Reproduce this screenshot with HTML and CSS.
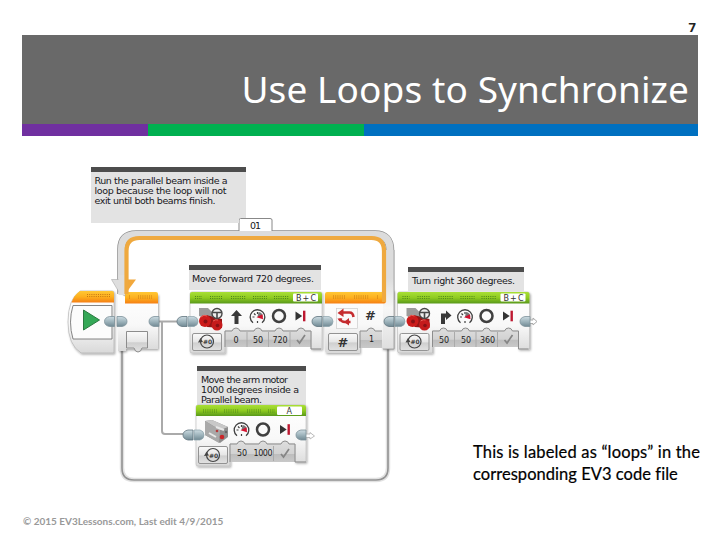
FILE: index.html
```html
<!DOCTYPE html>
<html lang="en">
<head>
<meta charset="utf-8">
<title>Use Loops to Synchronize</title>
<link rel="stylesheet" href="styles.css">
</head>
<body>
<main class="slide">
  <div class="page-number">7</div>
  <header class="banner">
    <h1>Use Loops to Synchronize</h1>
    <div class="stripes"><i class="purple"></i><i class="green"></i><i class="blue"></i></div>
  </header>
  <section class="content">
    <svg class="program" viewBox="60 156 490 334" width="490" height="334">
      <defs>
        <linearGradient id="green" x2="0" y2="1"><stop offset="0" stop-color="#a9df36"/><stop offset=".5" stop-color="#8fcb20"/><stop offset="1" stop-color="#58981b"/></linearGradient>
        <linearGradient id="orange" x2="0" y2="1"><stop offset="0" stop-color="#ffc735"/><stop offset=".5" stop-color="#fdb01e"/><stop offset="1" stop-color="#f57f14"/></linearGradient>
        <linearGradient id="body" x2="0" y2="1"><stop offset="0" stop-color="#fff"/><stop offset=".55" stop-color="#f8f8f8"/><stop offset="1" stop-color="#d9d9d9"/></linearGradient>
        <linearGradient id="rail" gradientUnits="userSpaceOnUse" x1="0" y1="230" x2="0" y2="350"><stop offset="0" stop-color="#dcdcdc"/><stop offset=".4" stop-color="#dcdcdc"/><stop offset=".65" stop-color="#f7f7f7"/><stop offset="1" stop-color="#dedede"/></linearGradient>
        <linearGradient id="param" x2="0" y2="1"><stop offset="0" stop-color="#dedede"/><stop offset=".6" stop-color="#d2d2d2"/><stop offset=".62" stop-color="#bdbdbd"/><stop offset="1" stop-color="#c9c9c9"/></linearGradient>
        <linearGradient id="button" x2="0" y2="1"><stop offset="0" stop-color="#fafafa"/><stop offset=".5" stop-color="#e6e6e6"/><stop offset=".55" stop-color="#cfcfcf"/><stop offset="1" stop-color="#e2e2e2"/></linearGradient>
        <linearGradient id="steel" x2="0" y2="1"><stop offset="0" stop-color="#ccdbe1"/><stop offset=".45" stop-color="#a3b8c0"/><stop offset="1" stop-color="#718a94"/></linearGradient>
        <filter id="shade" x="-10%" y="-10%" width="125%" height="130%"><feDropShadow dx="1" dy="1.3" stdDeviation=".8" flood-opacity=".35"/></filter>
        <g id="join">
          <path d="M10-5H5Q0-4 0 0T5 5H10Z" fill="url(#steel)" stroke="#60747d" stroke-width=".8"/>
          <path d="M11-5H17Q21-4 21 0T17 5H11Z" fill="url(#steel)" stroke="#8aa0a9" stroke-width=".7"/>
        </g>
        <path id="plug" d="M10-5H5Q0-4 0 0T5 5H10Z" fill="url(#steel)" stroke="#7e929b" stroke-width=".8"/>
        <g id="gauge" fill="none" stroke="#3f3f3f">
          <path d="M-4.500 5.800A7.300 7.300 0 1 1 4.500 5.800" stroke-width="1.300"/>
          <path d="M-5 0h2M-3.500-3.500l1.500 1.500M0-5v2M0 4v2" stroke-width="1.200"/>
          <path d="M0 0L1-5A5 5 0 0 1 5.200 0Z" fill="#777" stroke="none"/>
          <path d="M-1 .3L5-2.700L5.500 2.200Z" fill="#d4122f" stroke="none"/>
        </g>
        <circle id="ring" r="6" fill="none" stroke="#404040" stroke-width="2.500"/>
        <g id="finish"><path d="M-5.500-4.600L1.200 0L-5.500 4.600Z" fill="#333"/><path d="M3.200-5.300V5.300" stroke="#bd1830" stroke-width="2.400"/></g>
        <path id="check" d="M-4 1L-1.500 4L4-4" fill="none" stroke="#858585" stroke-width="1.700"/>
        <g id="turns" fill="none" stroke="#444"><circle r="6.500" stroke-width="1.200"/><path d="M-9 1L-6.500-3.500L-4 .5" fill="#444" stroke="none"/><text x=".5" y="2.500" text-anchor="middle" class="rot">#0</text></g>
        <g id="motors">
          <path d="M199 308l9 0l6 6l-4 6l-11-4Z" fill="#9b9b9b"/><path d="M206 315l16 4v9l-15-1Z" fill="#951515"/>
          <circle cx="205" cy="321" r="6" fill="#cc1b1b"/><circle cx="217" cy="325" r="5.500" fill="#c51b1c"/>
          <circle cx="205.500" cy="321.500" r="2" fill="#891115"/><circle cx="217.500" cy="325.500" r="1.800" fill="#891115"/>
          <path d="M201 317q3-3 6-1M213 321q3-2 5-1" stroke="#ee6057" fill="none"/>
          <circle cx="217" cy="313.500" r="5" fill="#eee" stroke="#484848" stroke-width="1.400"/><path d="M212 312.500h10M217 313v5" stroke="#484848" stroke-width="1.600"/>
        </g>
        <g id="move">
          <path filter="url(#shade)" d="M190 294q0-2 2-2H320q2 0 2 2V349H311V331H225V353H192q-2 0-2-2Z" fill="url(#body)" stroke="#b8b8b8" stroke-width=".6"/>
          <path d="M190 303.500V294q0-2 2-2H320q2 0 2 2V303.500Z" fill="url(#green)"/>
          <path d="M195 296.500h7M210 296.500h13M231 296.500h15M253 296.500h14M274 296.500h15M195 298.500h7M210 298.500h13M231 298.500h15M253 298.500h14M274 298.500h15" class="grip green-grip"/>
          <rect x="293" y="293.500" width="25" height="8" rx="1" fill="#fff"/><text x="296" y="300.500" textLength="20" class="port">B+C</text>
          <use href="#motors"/>
          <use href="#gauge" x="257.500" y="317"/><use href="#ring" x="279" y="316"/><use href="#finish" x="301" y="316"/>
          <path d="M225 331h7q1-3 4-3t4 3h14q1-3 4-3t4 3h13q1-3 4-3t4 3h14q1-3 4-3t4 3h6v16H225Z" fill="url(#param)"/>
          <path d="M225 347V331h7q1-3 4-3t4 3h14q1-3 4-3t4 3h13q1-3 4-3t4 3h14q1-3 4-3t4 3h6v18h10" class="edge"/>
          <path d="M247 332v15M268.500 332v15M290 332v15" stroke="#aaa"/>
          <rect x="192.500" y="333.500" width="29" height="17" rx="1.500" fill="url(#button)" stroke="#959595"/><use href="#turns" x="207" y="341.500"/>
          <use href="#check" x="301" y="339"/>
        </g>
      </defs>

      <g class="wires">
        <path d="M122 348V468q0 12 12 12H376q12 0 12-12V348" stroke="#e1e1e1" stroke-width="4.500"/>
        <path d="M122 348V468q0 12 12 12H376q12 0 12-12V348" stroke="#929292" stroke-width="1.600"/>
        <path d="M158 321.500H178M162 322V431q0 3 3 3H183" stroke="#aaa" stroke-width="2"/>
      </g>

      <path d="M121.500 294V249q0-14.500 14.500-14.500H375q15 0 15 15.500V300" fill="none" stroke="#8d8d8d" stroke-width="8.500"/>
      <path d="M121.500 294V249q0-14.500 14.500-14.500H375q15 0 15 15.500V300" fill="none" stroke="#dcdcdc" stroke-width="7"/>
      <path d="M239 231V220q0-1.500 1.500-1.500H270q2 0 2 1.500V231" fill="#fff" stroke="#888"/>
      <text x="250" y="229" textLength="11" class="note-text">01</text>

      <g class="note">
        <path d="M91 167H246V218H239V223H91Z" fill="#e3e3e3"/><path d="M91 167H246V172H91Z" fill="#4d4d4d"/>
        <text x="94.500" y="184" textLength="133" class="note-text">Run the parallel beam inside a</text>
        <text x="94.500" y="194" textLength="132" class="note-text">loop because the loop will not</text>
        <text x="94.500" y="204" textLength="121" class="note-text">exit until both beams finish.</text>
        <path d="M189 265H321V290H189Z" fill="#e3e3e3"/><path d="M189 265H321V270H189Z" fill="#4d4d4d"/>
        <text x="192" y="282" textLength="122" class="note-text">Move forward 720 degrees.</text>
        <path d="M408 267H524V291H408Z" fill="#e3e3e3"/><path d="M408 267H524V272H408Z" fill="#4d4d4d"/>
        <text x="412" y="284" textLength="103" class="note-text">Turn right 360 degrees.</text>
        <path d="M197 366H306V406H197Z" fill="#e3e3e3"/><path d="M197 366H306V371H197Z" fill="#4d4d4d"/>
        <text x="201" y="383" textLength="87" class="note-text">Move the arm motor</text>
        <text x="201" y="393" textLength="98" class="note-text">1000 degrees inside a</text>
        <text x="201" y="403" textLength="61" class="note-text">Parallel beam.</text>
      </g>

      <g>
        <path filter="url(#shade)" d="M80 291H112q2 0 2 2V353H81Q68 345 68 322T80 291Z" fill="url(#body)" stroke="#aaa" stroke-width=".6"/>
        <path d="M71.500 302.500Q74 295 80 291H112q2 0 2 2V302.500Z" fill="url(#orange)"/>
        <path d="M87 294.500h23M87 296.500h23" class="grip orange-grip"/>
        <path d="M73 305.500H112V339H73Q68 322 73 305.500Z" fill="#fcfcfc" stroke="#777" stroke-width=".9"/>
        <path d="M83.500 310L99.500 320L83.500 330Z" fill="#35a857" stroke="#2b7a41"/>
        <path filter="url(#shade)" d="M118 296L126 294H158V349H126V351H118Z" fill="url(#body)"/>
        <path d="M125 292H156q2 0 2 2V303.500H125Z" fill="url(#orange)"/>
        <path d="M129 296h2M138 296h14M129 298h2M138 298h14" class="grip orange-grip"/>
        <path d="M111.500 279.500H125V296L119.500 293Z" fill="#dedede" stroke="#aaa" stroke-width=".6"/>
        <path d="M126 279.500H136L127.500 291H126Z" fill="#f2a83b"/>
        <rect x="118.500" y="275" width="6.500" height="20" fill="#dedede"/>
        <path d="M126.500 331.500H147.500V348H142q-1 4-4 4t-4-4h-7.500Z" fill="url(#button)" stroke="#8c8c8c"/>
        <use href="#plug" x="104.500" y="321.500"/><use href="#plug" transform="translate(127 321.500) scale(-1 1)"/><use href="#plug" x="149" y="321.500"/>
      </g>

      <g>
        <use href="#move"/>
        <path d="M236.500 310l5.500 6h-3.500V324h-4v-8h-3.500Z" fill="#393939"/>
        <g class="value"><text x="236" y="342.500">0</text><text x="258" y="342.500">50</text><text x="280" y="342.500" textLength="15">720</text></g>
        <use href="#join" x="177" y="321.500"/>
      </g>

      <g>
        <path filter="url(#shade)" d="M327 292H386V290H394V349H382V331H360V353H327q-2 0-2-2V294q0-2 2-2Z" fill="url(#body)"/>
        <path d="M386 250H394V348H383V303H386Z" fill="url(#rail)"/>
        <path d="M394 250V349H383" fill="none" stroke="#999" stroke-width=".8"/>
        <path d="M325 303.500V294q0-2 2-2H386V301q0 2.500-2 2.500Z" fill="url(#orange)"/>
        <path d="M333 296h13M354 296h15M377 296h1M333 298h13M354 298h15M377 298h1" class="grip orange-grip"/>
        <path d="M126.500 294V251q0-13 13-13H371.500q12.500 0 12.500 13V302" fill="none" stroke="#efa93f" stroke-width="4.200"/>
        <rect x="336.500" y="308.500" width="21" height="20" fill="#fafafa" stroke="#ccc" stroke-width=".7"/>
        <path d="M342 312.500H349.500q3.500 0 4 4.500M350.500 322H345q-4 0-5-3.500" fill="none" stroke="#c52c2f" stroke-width="2.600"/>
        <path d="M337.500 313l6-4.500v8.500ZM337.500 318.500h5l-3 3ZM344 322l5-4v7.500Z" fill="#c52c2f"/>
        <text x="370.500" y="320" class="hash">#</text>
        <path d="M360 331h7q1-3 4-3t4 3h7v17H360Z" fill="url(#param)"/><path d="M360 348V331h7q1-3 4-3t4 3h7" class="edge"/>
        <rect x="328.500" y="333.500" width="29" height="17" rx="1.500" fill="url(#button)" stroke="#929292"/>
        <text x="343" y="346.500" class="hash">#</text><g class="value"><text x="371.500" y="342">1</text></g>
      </g>

      <g>
        <use href="#move" x="207.500"/>
        <path d="M441 324V313.500H446V310.500L451.500 315.500L446 320V317.500H445V324Z" fill="#393939"/>
        <g class="value"><text x="444" y="342.500">50</text><text x="466" y="342.500">50</text><text x="487.500" y="342.500" textLength="15">360</text></g>
        <path d="M529 320H533V318L537 321.500L533 325V323.500H529" fill="#fff" stroke="#aaa"/>
        <use href="#plug" x="520" y="321.500"/>
        <use href="#join" x="312" y="321.500"/><use href="#join" x="384" y="321.500"/>
      </g>

      <g>
        <path filter="url(#shade)" d="M196 407q0-2 2-2H304q2 0 2 2V462H295V444H230V466H198q-2 0-2-2Z" fill="url(#body)" stroke="#b8b8b8" stroke-width=".6"/>
        <path d="M196 416V407q0-2 2-2H304q2 0 2 2V416Z" fill="url(#green)"/>
        <path d="M203 410h14M224 410h15M247 410h14M268 410h7M203 412h14M224 412h15M247 412h14M268 412h7" class="grip green-grip"/>
        <rect x="277" y="406.500" width="25" height="8.500" rx="1" fill="#fff"/><text x="286.500" y="413.500" class="port">A</text>
        <path d="M205 421l7-1l16 7v10l-8 6l-15-8Z" fill="#8e8e8e"/><path d="M205 421l7-1l16 7l-8 3Z" fill="#c8c8c8"/><path d="M205 421l15 9l-1 13l-14-8Z" fill="#a9a9a9"/>
        <path d="M209 433l7 4M216 427l8 3" stroke="#e7e7e7" stroke-width="2"/><circle cx="222" cy="437" r="2.300" fill="#ca2528"/><circle cx="217" cy="431" r="1.300" fill="#b53a3b"/><circle cx="226" cy="432" r="1.200" fill="#666"/>
        <use href="#gauge" x="241.500" y="430"/><use href="#ring" x="263" y="429.500"/><use href="#finish" x="285.500" y="429.500"/>
        <path d="M230 444h7q1-3 4-3t4 3h14q1-3 4-3t4 3h14q1-3 4-3t4 3h6v18H230Z" fill="url(#param)"/>
        <path d="M230 462V444h7q1-3 4-3t4 3h14q1-3 4-3t4 3h14q1-3 4-3t4 3h6v18h11" class="edge"/>
        <path d="M273.500 446v15" stroke="#aaa"/>
        <rect x="198.500" y="446.500" width="29" height="17" rx="1.500" fill="url(#button)" stroke="#929292"/><use href="#turns" x="213" y="455"/>
        <g class="value"><text x="242" y="456">50</text><text x="263" y="456" textLength="19">1000</text></g><use href="#check" x="285" y="453"/>
        <use href="#join" x="183" y="435"/><path d="M306 434H310V432.500L314.500 436L310 439V437.500H306" fill="#fff" stroke="#bbb"/><use href="#plug" x="296" y="435"/>
      </g>
    </svg>
    <p class="caption"><span>This is labeled as “loops” in the</span><br><span class="second">corresponding EV3 code file</span></p>
  </section>
  <footer>© 2015 EV3Lessons.com, Last edit 4/9/2015</footer>
</main>
</body>
</html>
```
FILE: styles.css
```css
* { box-sizing: border-box; }
body { margin: 0; background: #fff; }
.slide { width: 720px; height: 540px; overflow: hidden; display: flex; flex-direction: column; font-family: Lato, sans-serif; }
.page-number { height: 35px; padding: 19px 24px 0 0; text-align: right; font: bold 13px/17px "Open Sans", sans-serif; color: #222; }
.banner { width: 676px; height: 101px; margin-left: 22px; background: #696969; display: flex; flex-direction: column; }
h1 { height: 89px; margin: 0; padding: 31px 9px 0 0; text-align: right; color: #fff; font: 400 37px/46px "Noto Sans", sans-serif; letter-spacing: .1px; white-space: nowrap; }
.stripes { height: 12px; display: grid; grid-template-columns: 126px 216px 334px; }
.purple { background: #7030a0; }
.green { background: #00b050; }
.blue { background: #0070c0; }
.content { height: 354px; padding: 20px 0 0 60px; display: flex; align-items: flex-start; }
.program { display: block; flex: none; }
.caption { flex: none; width: 240px; margin: 285px 0 0 -77px; font-size: 16.500px; line-height: 22px; letter-spacing: .17px; color: #000; white-space: nowrap; -webkit-text-stroke: .2px #000; }
.second { letter-spacing: .04px; }
footer { margin: 24px 0 0 23px; color: #999; font-size: 10px; line-height: 15px; font-weight: bold; }
.wires { fill: none; }
.note-text { font: 9.500px "DejaVu Sans", sans-serif; fill: #171722; }
.port { font: 8px "DejaVu Sans", sans-serif; fill: #333; }
.value { font: 8px "DejaVu Sans", sans-serif; fill: #222; text-anchor: middle; }
.hash { font: bold 13px "DejaVu Sans", sans-serif; fill: #333; text-anchor: middle; }
.rot { font: bold 6px "DejaVu Sans", sans-serif; fill: #444; stroke: none; }
.grip { fill: none; stroke-width: 1; stroke-dasharray: 1 1.200; }
.green-grip { stroke: #4d851b; }
.orange-grip { stroke: #c87812; }
.edge { fill: none; stroke: #8d8d8d; stroke-width: 1; }
```
